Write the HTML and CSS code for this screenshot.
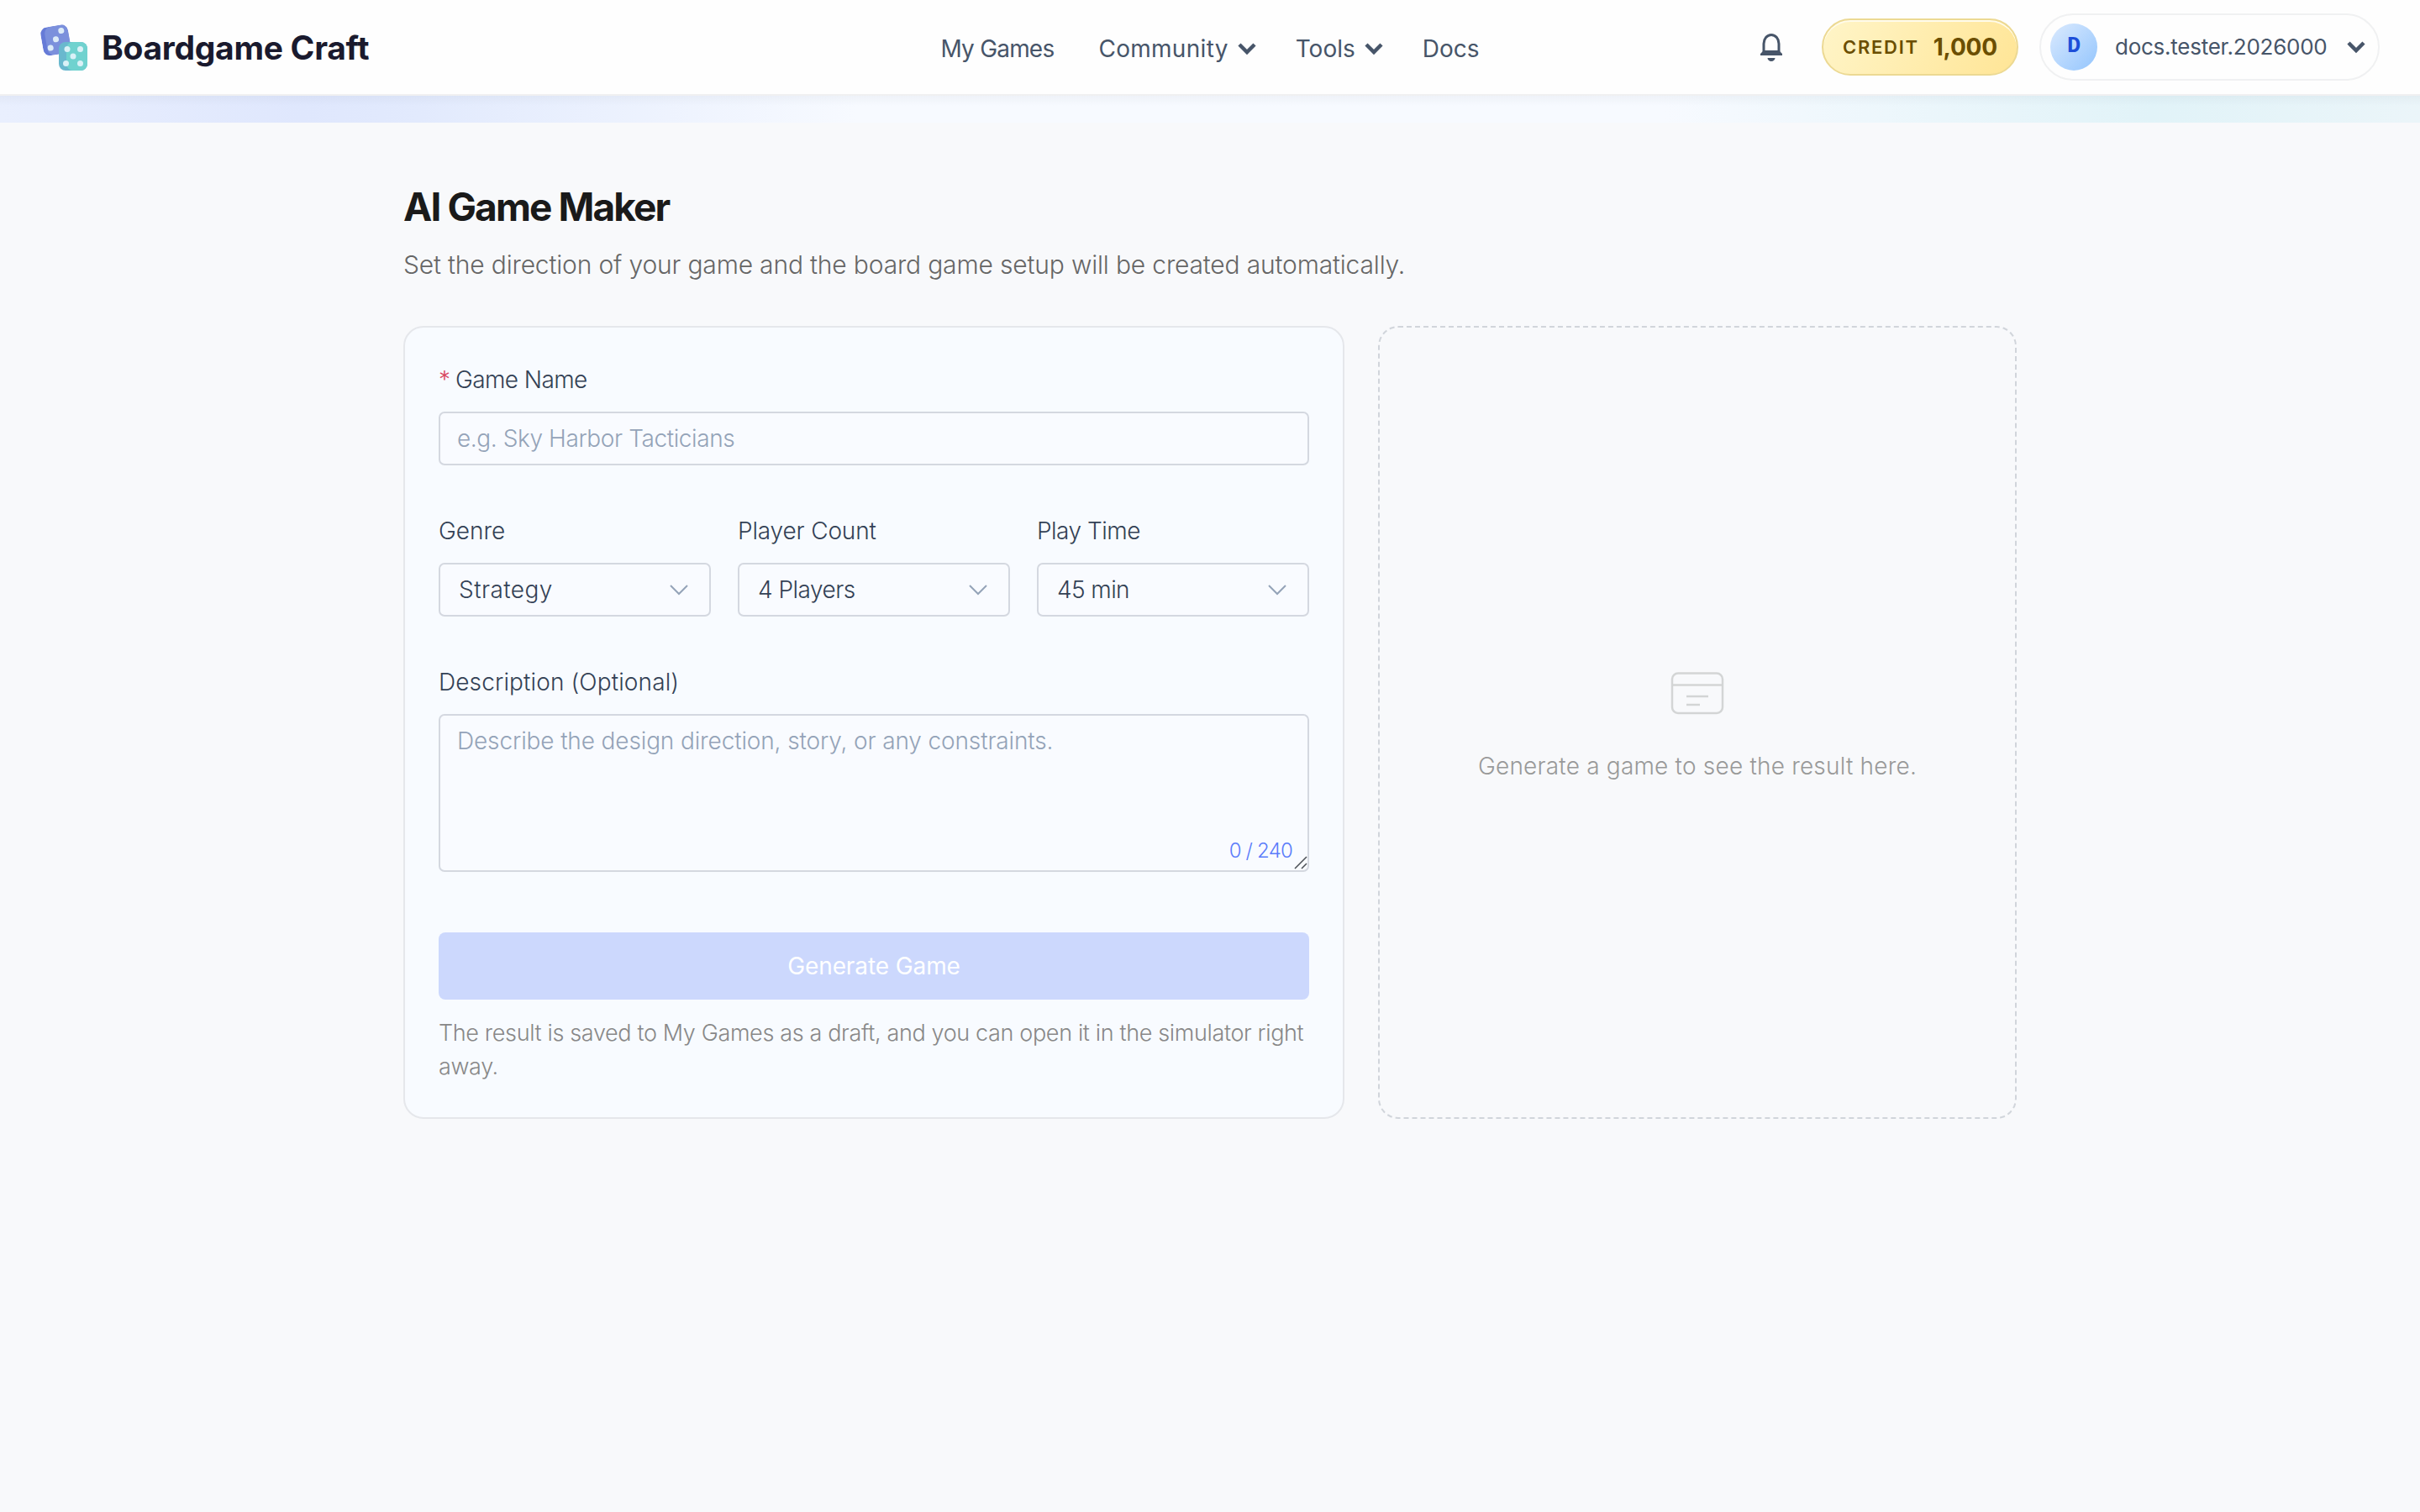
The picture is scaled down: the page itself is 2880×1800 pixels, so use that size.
FILE: index.html
```html
<!DOCTYPE html>
<html lang="en">
<head>
    <meta charset="utf-8">
    <title>AI Game Maker</title>
    <link rel="stylesheet" href="styles.css">
</head>
<body>
    <header class="topbar">
        <a class="brand">
            <svg class="brandLogo" viewBox="0 0 56 56">
                <clipPath id="dieA"><rect width="33" height="34" rx="8"/></clipPath>
                <g transform="translate(-1 6) rotate(-10)">
                    <g clip-path="url(#dieA)">
                        <rect width="33" height="34" fill="#667bd7"/>
                        <rect x="5" width="30" height="34" rx="8" fill="#7b90dc"/>
                    </g>
                    <circle cx="25" cy="7" r="3.5" fill="#dcebf8"/>
                    <circle cx="17" cy="16" r="3.5" fill="#dcebf8"/>
                    <circle cx="9" cy="25" r="3.5" fill="#dcebf8"/>
                </g>
                <rect x="22" y="22" width="34" height="34" rx="8" fill="#69b8ce"/>
                <rect x="31" y="22" width="25" height="34" rx="8" fill="#70d2cf"/>
                <g fill="#daf1f7">
                    <circle cx="32" cy="30.500" r="3.500"/><circle cx="47.500" cy="30.500" r="3.500"/>
                    <circle cx="39" cy="39" r="3.500"/>
                    <circle cx="30.500" cy="47.500" r="3.500"/><circle cx="47.500" cy="47.500" r="3.500"/>
                </g>
            </svg>
            <span class="brandName">Boardgame Craft</span>
        </a>

        <nav class="mainNav">
            <a class="navMyGames"><span>My Games</span></a>
            <a class="navCommunity"><span>Community</span>
                <svg class="caret" viewBox="0 0 22 14"><path d="M2 2l9 9 9-9"/></svg></a>
            <a class="navTools"><span>Tools</span>
                <svg class="caret" viewBox="0 0 22 14"><path d="M2 2l9 9 9-9"/></svg></a>
            <a class="navDocs"><span>Docs</span></a>
        </nav>

        <div class="account">
            <svg class="bell" viewBox="0 0 28 36">
                <path d="M5 24V14a9 10.500 0 0 1 18 0v10" fill="none" stroke="currentColor" stroke-width="3"/>
                <path d="M5 22h18l4 4v2H1v-2zM9.500 31h9a4.500 4 0 0 1-9 0z" fill="currentColor"/>
            </svg>
            <div class="credit"><span class="creditLabel">CREDIT</span><span class="creditValue">1,000</span></div>
            <div class="user">
                <span class="avatar">D</span>
                <span class="userName">docs.tester.2026000</span>
                <svg class="caret" viewBox="0 0 22 14"><path d="M2 2l9 9 9-9"/></svg>
            </div>
        </div>
    </header>
    <div class="glow"></div>

    <main class="page">
        <h1 class="title"><span>AI Game Maker</span></h1>
        <p class="subtitle"><span>Set the direction of your game and the board game setup will be created automatically.</span></p>

        <div class="columns">
            <form class="makerForm">
                <div class="field">
                    <label class="fieldLabel"><i class="required">*</i><span class="lblName">Game Name</span></label>
                    <div class="inputBox placeholder"><span class="phName">e.g. Sky Harbor Tacticians</span></div>
                </div>

                <div class="fieldRow">
                    <div class="field">
                        <label class="fieldLabel"><span class="lblGenre">Genre</span></label>
                        <div class="inputBox select"><span class="valGenre">Strategy</span>
                            <svg class="arrow" viewBox="0 0 22 14"><path d="M1 2l10 10 10-10"/></svg></div>
                    </div>
                    <div class="field">
                        <label class="fieldLabel"><span class="lblCount">Player Count</span></label>
                        <div class="inputBox select"><span class="valCount">4 Players</span>
                            <svg class="arrow" viewBox="0 0 22 14"><path d="M1 2l10 10 10-10"/></svg></div>
                    </div>
                    <div class="field">
                        <label class="fieldLabel"><span class="lblTime">Play Time</span></label>
                        <div class="inputBox select"><span class="valTime">45 min</span>
                            <svg class="arrow" viewBox="0 0 22 14"><path d="M1 2l10 10 10-10"/></svg></div>
                    </div>
                </div>

                <div class="field">
                    <label class="fieldLabel"><span class="lblDesc">Description (Optional)</span></label>
                    <div class="textBox placeholder">
                        <span class="phDesc">Describe the design direction, story, or any constraints.</span>
                        <span class="counter">0 / 240</span>
                        <svg class="grip" viewBox="0 0 16 16"><path d="M1 15L15 1M9 15l6-6"/></svg>
                    </div>
                </div>

                <button class="generate" type="button" disabled><span>Generate Game</span></button>
                <p class="note"><span>The result is saved to My Games as a draft, and you can open it in the simulator right</span><br>away.</p>
            </form>

            <section class="result">
                <svg class="emptyIcon" viewBox="0 0 64 52">
                    <rect x="2" y="1.500" width="60" height="47.500" rx="7"/>
                    <path d="M2 15.500h60M19 29h26M19 39h16"/>
                </svg>
                <p class="emptyText"><span>Generate a game to see the result here.</span></p>
            </section>
        </div>
    </main>
</body>
</html>
```
FILE: styles.css
```css
* {
    box-sizing: border-box;
}

body {
    margin: 0;
    min-height: 1800px;
    background: #f8f9fb;
    color: #334155;
    font-family: Inter, "Open Sans", sans-serif;
    font-size: 28px;
    font-weight: 300;
}

svg {
    display: block;
    flex: none;
    overflow: visible;
}

span {
    white-space: nowrap;
}

.topbar {
    height: 114px;
    display: grid;
    grid-template-columns: 1fr auto 1fr;
    align-items: center;
    padding: 0 48px;
    background: #fefefe;
    border-bottom: 2px solid #f0f0f1;
}

.brand {
    display: flex;
    align-items: center;
    gap: 17px;
}

.brandLogo {
    width: 56px;
    height: 56px;
}

.brandName {
    color: #1a1a2e;
    font-size: 39px;
    font-weight: 650;
    letter-spacing: -0.3px;
}

.mainNav {
    display: flex;
    gap: 47px;
    color: #475569;
    font-weight: 400;
    padding-top: 4px;
}

.mainNav a {
    display: flex;
    align-items: center;
    gap: 11px;
}

.navMyGames {
    margin-right: 6px;
    letter-spacing: -0.8px;
}

.navCommunity {
    letter-spacing: 0.3px;
}

.caret {
    width: 22px;
    height: 14px;
    fill: none;
    stroke: #475569;
    stroke-width: 4.5;
}

.account {
    display: flex;
    align-items: center;
    justify-content: flex-end;
    color: #475569;
}

.bell {
    width: 28px;
    height: 36px;
    margin-right: 46px;
}

.credit {
    width: 234px;
    height: 68px;
    display: flex;
    align-items: center;
    justify-content: center;
    gap: 17px;
    margin-right: 25px;
    border: 2px solid #ecd993;
    border-radius: 34px;
    background: linear-gradient(120deg, #fff5c8, #ffe596);
    box-shadow: inset 0 2px 0 #fffbea;
    color: #6b4e00;
}

.creditLabel {
    font-size: 22px;
    font-weight: 600;
    letter-spacing: 1.7px;
}

.creditValue {
    font-size: 28px;
    font-weight: 700;
    letter-spacing: -0.2px;
}

.user {
    width: 405px;
    height: 80px;
    display: flex;
    align-items: center;
    padding-left: 11px;
    border: 2px solid #f0f1f2;
    border-radius: 40px;
}

.avatar {
    width: 56px;
    height: 56px;
    border-radius: 50%;
    background: linear-gradient(135deg, #dbeafe, #93c5fd);
    color: #1d4ed8;
    font-family: "Liberation Mono", monospace;
    font-size: 27px;
    font-weight: 700;
    line-height: 54px;
    text-align: center;
}

.userName {
    width: 254px;
    margin: 0 22px 2px 21px;
    font-size: 26px;
    font-weight: 400;
    letter-spacing: -0.25px;
}

.glow {
    height: 32px;
    background:
        linear-gradient(rgba(100, 116, 139, 0.06), transparent 12px),
        linear-gradient(90deg, #e9effe 0, #dfe7fd 360px, #e2eafd 500px, #f7faff 1020px, #f7faff 1980px, #e1f3f8 2560px, #ebf5f9 2880px);
}

.page {
    width: 1920px;
    margin: 0 auto;
    padding-top: 68px;
}

.title {
    margin: 0;
    color: #1a1a1a;
    font-size: 46px;
    font-weight: 700;
    line-height: 64px;
    letter-spacing: -1.9px;
}

.subtitle {
    margin: 15px 0 51px;
    color: #666;
    font-size: 30px;
    line-height: 44px;
    letter-spacing: -0.17px;
}

.columns {
    display: grid;
    grid-template-columns: 1120px 760px;
    gap: 40px;
    height: 944px;
}

.makerForm {
    padding: 38px 40px;
    border: 2px solid #e5e7eb;
    border-radius: 24px;
    background: #f8fbff;
}

.field {
    margin-bottom: 54px;
}

.fieldLabel {
    display: flex;
    align-items: center;
    height: 48px;
    margin-bottom: 14px;
    color: #334155;
}

.required {
    width: 20px;
    color: #d9485f;
    font-style: normal;
}

.lblName {
    letter-spacing: -0.6px;
}

.lblCount {
    letter-spacing: -0.15px;
}

.lblTime {
    letter-spacing: -0.5px;
}

.lblDesc {
    letter-spacing: 0.12px;
}

.inputBox,
.textBox {
    border: 2px solid #d4d8e0;
    border-radius: 7px;
    background: #f9fbff;
}

.inputBox {
    display: flex;
    align-items: center;
    justify-content: space-between;
    height: 64px;
    padding: 0 20px;
}

.placeholder {
    color: #94a3b8;
}

.phName {
    letter-spacing: -0.4px;
}

.phDesc {
    letter-spacing: -0.13px;
}

.select {
    padding: 0 25px 0 22px;
}

.valGenre {
    letter-spacing: 0.45px;
}

.valCount {
    letter-spacing: -0.5px;
}

.valTime {
    letter-spacing: -0.6px;
}

.arrow {
    width: 22px;
    height: 14px;
    fill: none;
    stroke: #94a3b8;
    stroke-width: 2;
}

.fieldRow {
    display: grid;
    grid-template-columns: repeat(3, 1fr);
    gap: 32px;
}

.textBox {
    position: relative;
    height: 188px;
    padding: 10px 20px;
    line-height: 40px;
}

.counter {
    position: absolute;
    right: 18px;
    bottom: 3px;
    color: #5b7cfa;
    font-size: 24px;
    letter-spacing: -0.8px;
}

.grip {
    position: absolute;
    right: 0;
    bottom: 1px;
    width: 16px;
    height: 16px;
    fill: none;
    stroke: #4b4f55;
    stroke-width: 1.5;
}

.generate {
    display: block;
    width: 100%;
    height: 80px;
    margin-top: 72px;
    border: 0;
    border-radius: 8px;
    background: #ccd8fd;
    color: #fff;
    font: 400 28px Inter, sans-serif;
    letter-spacing: -0.1px;
}

.note {
    margin: 20px 0 0;
    color: #888;
    font-size: 27px;
    line-height: 40px;
    letter-spacing: -0.36px;
}

.result {
    display: flex;
    flex-direction: column;
    align-items: center;
    justify-content: center;
    padding-top: 13px;
    border: 2px dashed #d1d5db;
    border-radius: 24px;
}

.emptyIcon {
    width: 64px;
    height: 52px;
    fill: none;
    stroke: #d3d5d5;
    stroke-width: 2.5;
}

.emptyText {
    margin: 38px 0 0;
    color: #999;
    line-height: 44px;
    letter-spacing: 0.2px;
}
```
